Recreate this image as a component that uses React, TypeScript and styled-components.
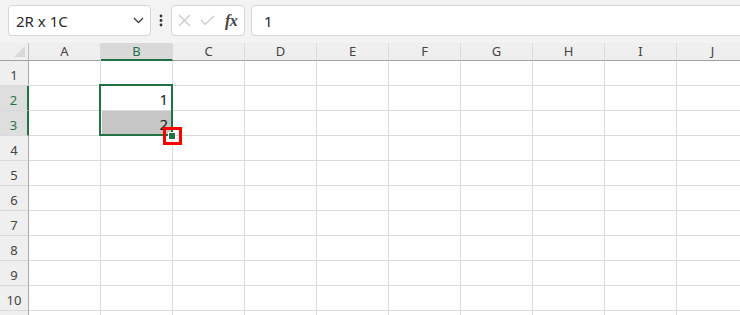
import React from "react";
import styled, { createGlobalStyle, css } from "styled-components";

const GREEN = "#217346";

const Global = createGlobalStyle`
  html, body { margin: 0; padding: 0; background: #fff; }
  body { font-family: "Noto Sans", "Noto Sans CJK JP", sans-serif; overflow: hidden; }
  * { box-sizing: border-box; }
`;

const Page = styled.div`
  width: 740px;
  height: 315px;
  overflow: hidden;
  background: #fff;
`;

const TopBar = styled.div`
  display: flex;
  align-items: flex-start;
  height: 43px;
  padding: 5px 0 0 8px;
  background: #f3f3f3;
`;

const Box = styled.div`
  height: 31px;
  background: #fff;
  border: 1px solid #d6d6d6;
  border-radius: 4px;
  display: flex;
  align-items: center;
`;

const NameBox = styled(Box)`
  width: 143px;
  padding: 0 6px 0 7px;
  justify-content: space-between;
  font-size: 15px;
  color: #2b2b2b;
`;

const DotsWrap = styled.div`
  width: 20px;
  height: 31px;
  display: flex;
  align-items: center;
  justify-content: center;
`;

const FxBox = styled(Box)`
  width: 74px;
  padding: 0 4px 0 6px;
  gap: 9px;
`;

const FxText = styled.span`
  font-family: "Liberation Serif", "DejaVu Serif", serif;
  font-style: italic;
  font-weight: bold;
  font-size: 16px;
  color: #444;
  margin-left: 1px;
  letter-spacing: -0.5px;
`;

const FormulaBox = styled(Box)`
  flex: 1;
  margin-left: 6px;
  margin-right: -10px;
  padding-left: 12px;
  font-size: 15px;
  color: #1e1e3c;
`;

const Sheet = styled.div`
  position: relative;
  display: grid;
  grid-template-columns: 29px repeat(10, 72px);
  grid-template-rows: 18px;
  grid-auto-rows: 25px;
  background: #fff;
`;

const Corner = styled.div`
  position: relative;
  background: #efefef;
  border-right: 1px solid #bcbcbc;
  border-bottom: 1px solid #a0a0a0;
  &::after {
    content: "";
    position: absolute;
    right: 3px;
    bottom: 3px;
    width: 0;
    height: 0;
    border-left: 11px solid transparent;
    border-bottom: 11px solid #d9d9d9;
  }
`;

const ColHead = styled.div<{ $active?: boolean }>`
  background: #efefef;
  border-right: 1px solid #dadada;
  border-bottom: 1px solid #a0a0a0;
  display: flex;
  align-items: flex-end;
  justify-content: center;
  padding-bottom: 1px;
  font-size: 13px;
  color: #444;
  line-height: 15px;
  ${(p) =>
    p.$active &&
    css`
      background: #d9d9d9;
      color: ${GREEN};
      border-bottom: 2px solid ${GREEN};
      padding-bottom: 0;
    `}
`;

const RowHead = styled.div<{ $active?: boolean }>`
  background: #efefef;
  border-right: 1px solid #a8a8a8;
  border-bottom: 1px solid #dadada;
  display: flex;
  align-items: flex-end;
  justify-content: center;
  padding-bottom: 2px;
  font-size: 13px;
  line-height: 15px;
  color: #444;
  ${(p) =>
    p.$active &&
    css`
      background: #dedede;
      color: ${GREEN};
      border-right: 2px solid ${GREEN};
    `}
`;

const Cell = styled.div<{ $shaded?: boolean }>`
  border-right: 1px solid #dadada;
  border-bottom: 1px solid #dadada;
  display: flex;
  align-items: center;
  justify-content: flex-end;
  padding: 2px 4px 0 0;
  font-size: 15px;
  color: #1a1a1a;
  ${(p) =>
    p.$shaded &&
    css`
      background: #c6c6c6;
      box-shadow: inset 1px 0 0 #fff, inset -1px 0 0 #fff, inset 0 -1px 0 #fff;
    `}
`;

const Selection = styled.div`
  position: absolute;
  left: 99px;
  top: 41px;
  width: 74px;
  height: 52px;
  border: 2px solid ${GREEN};
  pointer-events: none;
`;

const Handle = styled.div`
  position: absolute;
  left: 168px;
  top: 89px;
  width: 8px;
  height: 8px;
  background: ${GREEN};
  border: 1px solid #fff;
`;

const Marker = styled.div`
  position: absolute;
  left: 163px;
  top: 84px;
  width: 19px;
  height: 18px;
  border: 3px solid #f00;
`;

const cols = ["A", "B", "C", "D", "E", "F", "G", "H", "I", "J"];
const rows = [1, 2, 3, 4, 5, 6, 7, 8, 9, 10, 11];

const data: Record<string, string> = { B2: "1", B3: "2" };

export default function App() {
  return (
    <Page>
      <Global />
      <TopBar>
        <NameBox>
          <span>2R x 1C</span>
          <svg width="11" height="7" viewBox="0 0 11 7">
            <polyline points="1,1 5.5,5.5 10,1" fill="none" stroke="#444" strokeWidth="1.4" />
          </svg>
        </NameBox>
        <DotsWrap>
          <svg width="4" height="13" viewBox="0 0 4 13">
            <circle cx="2" cy="2" r="1.4" fill="#333" />
            <circle cx="2" cy="6.5" r="1.4" fill="#333" />
            <circle cx="2" cy="11" r="1.4" fill="#333" />
          </svg>
        </DotsWrap>
        <FxBox>
          <svg width="13" height="13" viewBox="0 0 13 13">
            <path d="M1 1 L12 12 M12 1 L1 12" stroke="#c8c8c8" strokeWidth="1.2" fill="none" />
          </svg>
          <svg width="15" height="11" viewBox="0 0 15 11">
            <polyline points="1,5 5,9.5 14,1" stroke="#c8c8c8" strokeWidth="1.2" fill="none" />
          </svg>
          <FxText>fx</FxText>
        </FxBox>
        <FormulaBox>1</FormulaBox>
      </TopBar>
      <Sheet>
        <Corner />
        {cols.map((c) => (
          <ColHead key={c} $active={c === "B"}>
            {c}
          </ColHead>
        ))}
        {rows.map((r) => (
          <React.Fragment key={r}>
            <RowHead $active={r === 2 || r === 3}>{r <= 10 ? r : ""}</RowHead>
            {cols.map((c) => (
              <Cell key={c + r} $shaded={c === "B" && r === 3}>
                {data[c + r] ?? ""}
              </Cell>
            ))}
          </React.Fragment>
        ))}
        <Selection />
        <Marker />
        <Handle />
      </Sheet>
    </Page>
  );
}
